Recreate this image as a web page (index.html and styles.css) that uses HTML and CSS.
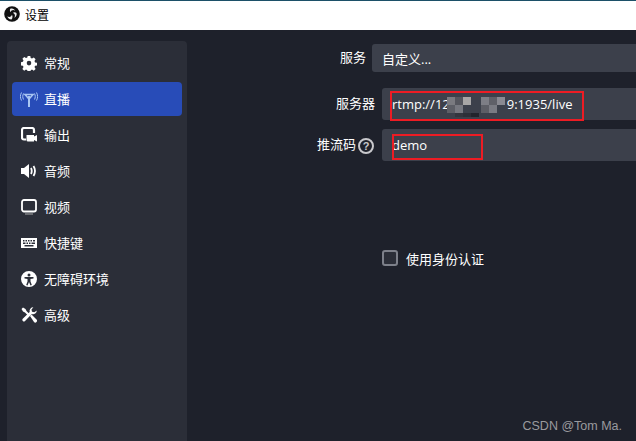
FILE: index.html
```html
<!DOCTYPE html>
<html lang="zh">
<head>
<meta charset="utf-8">
<title>设置</title>
<link rel="stylesheet" href="styles.css">
</head>
<body>
<div class="window">
  <header class="titlebar">
    <svg class="logo" viewBox="0 0 16 16" width="16" height="16">
      <circle cx="8" cy="8" r="7.800" fill="#111"/>
      <path d="M6.600 2.600c2-.6 4 .4 4.600 2.200-1-.9-2.600-1-3.600-.2-.6.4-.9 1-1 1.600C5.700 5 5.600 3.400 6.600 2.600z" fill="#eee"/>
      <path d="M12.500 7c.6 2-.4 4-2.200 4.700.8-1.100.9-2.700.1-3.700-.4-.5-1-.9-1.600-1C9.700 6 11.400 6 12.500 7z" fill="#eee"/>
      <path d="M7.500 13.500c-2 .1-3.800-1.300-4.100-3.200 1 .8 2.600.8 3.600 0 .5-.4.800-1 .9-1.600.9 1.200.8 3.500-.4 4.800z" fill="#eee"/>
    </svg>
    <span class="title">设置</span>
  </header>
  <div class="content">
    <nav class="sidebar">
      <a class="item">
        <svg class="icon" viewBox="0 0 16 16"><path fill="#fff" fill-rule="evenodd" d="M6.700 1h2.600l.4 2 1.300.6 1.800-1.100 1.800 1.800-1.100 1.800.6 1.300 2 .4v2.600l-2 .4-.6 1.300 1.100 1.800-1.800 1.800-1.800-1.100-1.300.6-.4 2H6.700l-.4-2-1.300-.6-1.800 1.100-1.800-1.800 1.100-1.800-.6-1.300-2-.4V7.200l2-.4.6-1.300-1.100-1.800 1.800-1.800L5 3l1.300-.6zM8 5.800a2.300 2.300 0 1 0 0 4.600 2.300 2.300 0 0 0 0-4.600z"/></svg>
        <span>常规</span>
      </a>
      <a class="item active">
        <svg class="icon wide" viewBox="0 0 18 16" fill="none" stroke="#a9c6f2"><path d="M9 5v11" stroke-width="2"/><path d="M5 3.500h8L9 8z" stroke-width="1.500"/><path d="M3.500 2.500c-1 2-1 4 0 6M1.500 1.500c-1.500 3-1.500 5 0 8M14.500 2.500c1 2 1 4 0 6M16.500 1.500c1.500 3 1.500 5 0 8"/></svg>
        <span>直播</span>
      </a>
      <a class="item">
        <svg class="icon" viewBox="0 0 16 16"><path fill="none" stroke="#fff" stroke-width="2.200" d="M5 12.500H3a2 2 0 0 1-2-2V3a2 2 0 0 1 2-2h8a2 2 0 0 1 2 2v3"/><path fill="#fff" d="M5.500 8h7.500v1.500L16 8v6.500L13 13v1.500H7a1.500 1.500 0 0 1-1.500-1.500z"/></svg>
        <span>输出</span>
      </a>
      <a class="item">
        <svg class="icon" viewBox="0 0 16 16"><path fill="#fff" d="M0 5h3l5-4v14l-5-4H0z"/><path fill="none" stroke="#fff" stroke-width="1.800" d="M10 5c1 2 1 4 0 6M12.500 3c1.800 3 1.800 7 0 10"/></svg>
        <span>音频</span>
      </a>
      <a class="item">
        <svg class="icon" viewBox="0 0 16 16"><rect x="1" y="1" width="14" height="11.500" rx="2" fill="none" stroke="#fff" stroke-width="1.800"/><path stroke="#aaa" d="M4 15h8"/></svg>
        <span>视频</span>
      </a>
      <a class="item">
        <svg class="icon" viewBox="0 0 16 16"><path fill="#fff" fill-rule="evenodd" d="M0 3h16v10H0zM2 5v1.500h1.500V5zm2.500 0v1.500H6V5zM7 5v1.500h1.500V5zm2.500 0v1.500H11V5zM12 5v1.500h2V5zM2 7.500V9h2.500V7.500zm3.500 0V9H7V7.500zm2.500 0V9h1.500V7.500zm2.500 0V9H14V7.500zM3.500 10v1.500h9V10z"/></svg>
        <span>快捷键</span>
      </a>
      <a class="item">
        <svg class="icon" viewBox="0 0 16 16"><path fill="#fff" fill-rule="evenodd" d="M8 0a8 8 0 1 0 0 16A8 8 0 0 0 8 0zm0 2.500a1.500 1.500 0 1 1 0 3 1.500 1.500 0 0 1 0-3zM3.500 6h9v1.400l-3 .6v2.500l1.300 3.500-1.300.5L8 11l-1.500 3.500-1.300-.5 1.300-3.500V8l-3-.6z"/></svg>
        <span>无障碍环境</span>
      </a>
      <a class="item">
        <svg class="icon" viewBox="0 0 16 16"><path fill="#fff" d="M.5 2L2 .5l2.500 1.500 1 2 3 3-1.500 1.500-3-3-2-1z"/><path fill="#fff" d="M9 9l1.500-1.500 5 5a1.500 1.500 0 0 1-2.500 2.500z"/><path fill="#fff" d="M15.800 3.500a3.800 3.800 0 0 1-5 3.600L3.800 14.300a1.700 1.700 0 0 1-2.300-2.300l7.200-7a3.800 3.800 0 0 1 3.700-4.800L10.500 2.500l.5 2.300 2.300.5z"/></svg>
        <span>高级</span>
      </a>
    </nav>
    <main class="main">
      <div class="row row-service">
        <label class="label">服务</label>
        <div class="field"><span>自定义...</span></div>
      </div>
      <div class="row row-server">
        <label class="label">服务器</label>
        <div class="field tall">
          <span>rtmp://12<span class="masked"></span>9:1935/live</span>
          <svg class="mosaic" viewBox="0 0 58 24" width="58" height="24">
            <rect x="0" y="0" width="8" height="8" fill="#7a7a80"/><rect x="8" y="0" width="8" height="8" fill="#55565e"/><rect x="16" y="0" width="8" height="8" fill="#a8a6a6"/>
            <rect x="0" y="8" width="8" height="8" fill="#5d5e66"/><rect x="8" y="8" width="8" height="8" fill="#777880"/>
            <rect x="34" y="0" width="8" height="8" fill="#7d7e86"/><rect x="42" y="0" width="8" height="8" fill="#5f6068"/><rect x="50" y="0" width="8" height="8" fill="#8a8a92"/>
            <rect x="34" y="8" width="8" height="8" fill="#5d5e66"/><rect x="42" y="8" width="8" height="8" fill="#7a7b83"/>
            <rect x="8" y="16" width="8" height="4" fill="#33353e"/><rect x="16" y="16" width="8" height="4" fill="#2d2f38"/><rect x="24" y="16" width="8" height="4" fill="#22242c"/>
          </svg>
          <span class="redbox box-server"></span>
        </div>
      </div>
      <div class="row row-key">
        <label class="label">推流码 <span class="help">?</span></label>
        <div class="field tall">
          <span>demo</span>
          <span class="redbox box-key"></span>
        </div>
      </div>
      <div class="check-row">
        <span class="checkbox"></span>
        <span>使用身份认证</span>
      </div>
    </main>
  </div>
  <footer class="watermark">CSDN @Tom Ma.</footer>
</div>
</body>
</html>
```
FILE: styles.css
```css
* { box-sizing: border-box; }
html, body { margin: 0; padding: 0; }
body {
  width: 636px;
  height: 441px;
  overflow: hidden;
  background: #1e212b;
  font-family: "Noto Sans CJK SC", "Noto Sans", sans-serif;
  font-size: 13px;
  color: #fff;
}
.window { position: relative; width: 636px; height: 441px; }
.titlebar {
  height: 30px;
  background: #fff;
  border-top: 1px solid #1c5068;
  display: flex;
  align-items: center;
  gap: 5px;
  padding: 0 0 3px 4px;
  color: #000;
  font-size: 12px;
}
.logo { flex: none; }
.content { display: flex; height: 411px; padding: 11px 0 0 7px; }
.sidebar {
  width: 180px;
  flex: none;
  background: #2b2e38;
  border-radius: 4px 4px 0 0;
  padding: 4px 5px 0;
}
.item {
  height: 36px;
  display: flex;
  align-items: center;
  gap: 7px;
  padding-left: 9px;
  border-radius: 4px;
  font-size: 13px;
  line-height: 16px;
}
.item.active { background: #284cb8; height: 34px; margin: 1px 0; }
.icon { width: 16px; height: 16px; flex: none; }
.icon.wide { width: 18px; margin-left: -1px; margin-right: -1px; }
.main { flex: 1; position: relative; padding-top: 3px; min-width: 0; }
.row { display: flex; align-items: center; }
.label { flex: none; text-align: right; font-size: 13px; line-height: 16px; display: flex; align-items: center; justify-content: flex-end; }
.field {
  position: relative;
  flex: 1;
  background: #3c404b;
  border-radius: 3px 0 0 3px;
  display: flex;
  align-items: center;
  white-space: nowrap;
  height: 28px;
  padding-left: 10px;
  font-family: "Open Sans", "Noto Sans CJK SC", sans-serif;
  font-size: 13px;
}
.field.tall { height: 32px; }
.row-service .label { width: 179px; margin-right: 6px; padding-bottom: 2px; }
.row-server { margin-top: 16px; }
.row-key { margin-top: 9px; }
.row-server .label { width: 188px; margin-right: 7px; padding-bottom: 3px; }
.row-key .label { width: 187px; margin-right: 8px; padding-bottom: 2px; }
.masked { display: inline-block; width: 57px; }
.mosaic { position: absolute; left: 65px; top: 9px; }
.redbox { position: absolute; border: 2px solid #ed1c24; }
.box-server { left: 8px; top: 3px; width: 194px; height: 30px; }
.box-key { left: 10px; top: 5px; width: 91px; height: 26px; }
.help {
  width: 16px;
  height: 16px;
  margin-left: 2px;
  margin-top: 3px;
  border: 2px solid #c8c8cc;
  border-radius: 50%;
  font-size: 11px;
  font-weight: 700;
  line-height: 12px;
  text-align: center;
  color: #c8c8cc;
  font-family: "Liberation Sans", sans-serif;
}
.check-row {
  display: flex;
  align-items: center;
  gap: 8px;
  margin: 87px 0 0 195px;
  height: 20px;
  font-size: 13px;
}
.checkbox {
  width: 16px;
  height: 16px;
  border: 2px solid #7d808a;
  border-radius: 3px;
  background: #2b2e38;
  flex: none;
}
.watermark {
  position: absolute;
  right: 14px;
  bottom: 7px;
  font-family: "Liberation Sans", sans-serif;
  font-size: 12.500px;
  line-height: 16px;
  color: #9a9a9e;
}
```
